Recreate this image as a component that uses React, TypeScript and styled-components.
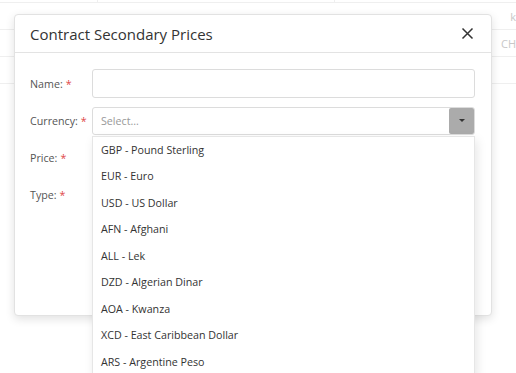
import styled, { createGlobalStyle } from "styled-components";

const GlobalStyle = createGlobalStyle`
  html, body {
    margin: 0;
    padding: 0;
    background: #fff;
    font-family: "Open Sans", "Noto Sans", sans-serif;
    color: #333;
  }
  * { box-sizing: border-box; }
`;

const Page = styled.div`
  position: relative;
  width: 516px;
  height: 373px;
  overflow: hidden;
`;

const Table = styled.div`
  display: flex;
  flex-direction: column;
  margin-top: -24px;
`;

const TableRow = styled.div`
  display: grid;
  grid-template-columns: 98px 237px 1fr;
  height: 27px;
  border-bottom: 1px solid #efefef;
`;

const TableCell = styled.div<{ $divider?: boolean; $indent?: number }>`
  display: flex;
  align-items: center;
  justify-content: ${(p) => (p.$indent !== undefined ? "flex-start" : "flex-end")};
  padding-left: ${(p) => p.$indent ?? 0}px;
  border-right: ${(p) => (p.$divider ? "1px solid #efefef" : "none")};
  font-size: 11px;
  color: #c8c8c8;
  overflow: hidden;
  white-space: nowrap;
`;

const Modal = styled.div`
  position: absolute;
  left: 14px;
  top: 14px;
  width: 478px;
  height: 302px;
  background: #fff;
  border: 1px solid #e2e2e2;
  border-radius: 4px;
  box-shadow: 0 3px 10px rgba(0, 0, 0, 0.12);
`;

const Header = styled.div`
  display: flex;
  align-items: center;
  justify-content: space-between;
  height: 38px;
  padding: 0 15px 0 15px;
  border-bottom: 1px solid #e3e3e3;
`;

const Title = styled.h4`
  margin: 0;
  font-size: 15px;
  font-weight: 400;
  color: #333;
`;

const Close = styled.button`
  display: flex;
  align-items: center;
  justify-content: center;
  width: 18px;
  height: 18px;
  padding: 0;
  border: none;
  background: none;
  color: #333;
`;

const Body = styled.div`
  display: flex;
  flex-direction: column;
  gap: 8px;
  padding: 16px 16px 0 15px;
`;

const Row = styled.div`
  display: flex;
  align-items: center;
  height: 29px;
`;

const Label = styled.label`
  width: 62px;
  flex-shrink: 0;
  font-size: 10.7px;
  color: #555;
`;

const Required = styled.span`
  color: #e04848;
  margin-left: 3px;
`;

const Input = styled.div`
  position: relative;
  flex: 1;
  height: 29px;
  border: 1px solid #dcdcdc;
  border-radius: 3px;
  background: #fff;
`;

const SelectBox = styled(Input)`
  display: flex;
  align-items: center;
  justify-content: space-between;
  height: 28px;
  padding: 0 0 0 8px;
`;

const Placeholder = styled.span`
  font-size: 10.7px;
  color: #999;
`;

const Toggle = styled.span`
  display: flex;
  align-items: center;
  justify-content: center;
  width: 25px;
  height: 26px;
  background: #ababab;
  border-radius: 2px;
`;

const Caret = styled.span`
  width: 0;
  height: 0;
  border-left: 3px solid transparent;
  border-right: 3px solid transparent;
  border-top: 3px solid #333;
`;

const Menu = styled.ul`
  position: absolute;
  left: -1px;
  right: -1px;
  top: 28px;
  margin: 0;
  padding: 0;
  list-style: none;
  background: #fff;
  border: 1px solid #e6e6e6;
  box-shadow: 2px 4px 10px rgba(0, 0, 0, 0.1);
  z-index: 2;
`;

const Option = styled.li`
  height: 26.5px;
  display: flex;
  align-items: center;
  padding-left: 8px;
  font-size: 10.7px;
  color: #333;
`;

const currencies = [
  "GBP - Pound Sterling",
  "EUR - Euro",
  "USD - US Dollar",
  "AFN - Afghani",
  "ALL - Lek",
  "DZD - Algerian Dinar",
  "AOA - Kwanza",
  "XCD - East Caribbean Dollar",
  "ARS - Argentine Peso",
];

const fields = ["Price:", "Type:"];

const App = () => {
  return (
    <>
      <GlobalStyle />
      <Page>
        <Table>
          <TableRow>
            <TableCell $divider />
            <TableCell $divider />
            <TableCell />
          </TableRow>
          <TableRow>
            <TableCell />
            <TableCell />
            <TableCell>k</TableCell>
          </TableRow>
          <TableRow>
            <TableCell />
            <TableCell />
            <TableCell $indent={166}>CH</TableCell>
          </TableRow>
          <TableRow />
        </Table>

        <Modal>
          <Header>
            <Title>Contract Secondary Prices</Title>
            <Close aria-label="Close">
              <svg width="13" height="13" viewBox="0 0 13 13">
                <path d="M1.5 1.5 L11.5 11.5 M11.5 1.5 L1.5 11.5" stroke="#333" strokeWidth="1.5" fill="none" />
              </svg>
            </Close>
          </Header>
          <Body>
            <Row>
              <Label>
                Name:<Required>*</Required>
              </Label>
              <Input />
            </Row>
            <Row>
              <Label>
                Currency:<Required>*</Required>
              </Label>
              <SelectBox>
                <Placeholder>Select...</Placeholder>
                <Toggle>
                  <Caret />
                </Toggle>
                <Menu>
                  {currencies.map((c) => (
                    <Option key={c}>{c}</Option>
                  ))}
                </Menu>
              </SelectBox>
            </Row>
            {fields.map((f) => (
              <Row key={f}>
                <Label>
                  {f}
                  <Required>*</Required>
                </Label>
              </Row>
            ))}
          </Body>
        </Modal>
      </Page>
    </>
  );
};

export default App;
